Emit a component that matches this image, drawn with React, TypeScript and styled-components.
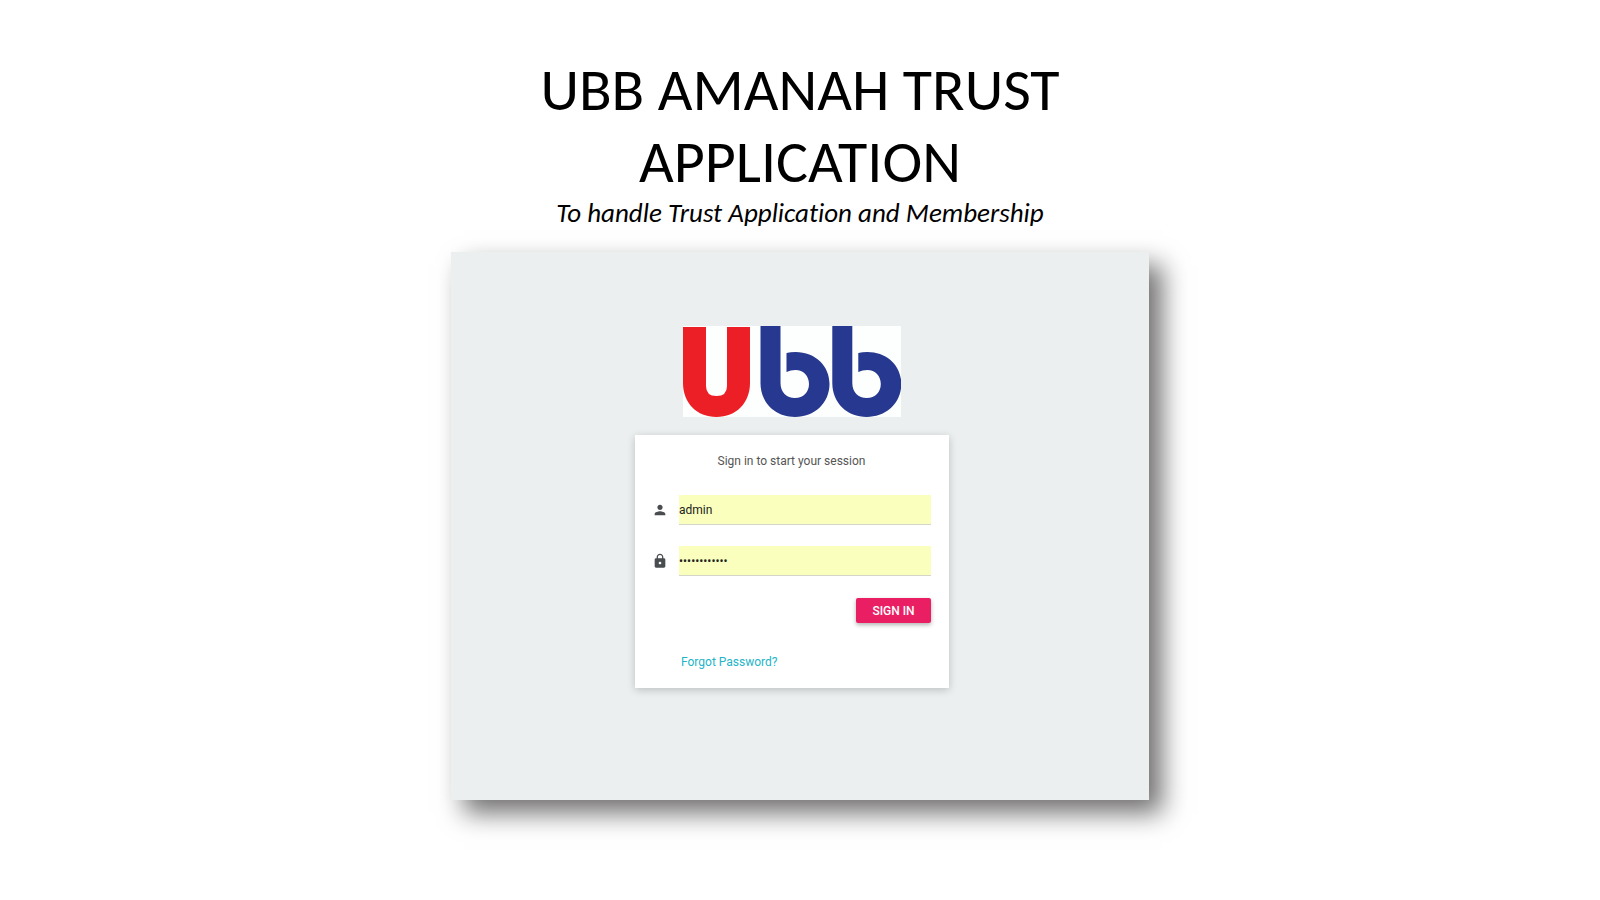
import React from "react";
import styled, { createGlobalStyle } from "styled-components";

const GlobalStyle = createGlobalStyle`
  * { box-sizing: border-box; }
  body { margin: 0; background: #fff; font-family: Roboto, "Liberation Sans", sans-serif; }
`;

const Page = styled.main`
  display: flex;
  flex-direction: column;
  align-items: center;
  min-height: 100vh;
  padding: 54px 16px 100px;
`;

const Heading = styled.header`
  width: 100%;
  max-width: 600px;
  margin-bottom: 24px;
  text-align: center;
  color: #000;
  font-family: Carlito, Calibri, "Open Sans", sans-serif;
  font-variant-ligatures: none;
`;

const Title = styled.h1`
  margin: 0;
  font-size: 60px;
  line-height: 72px;
  font-weight: 400;
`;

const Tagline = styled.p`
  margin: 0;
  font-size: 27px;
  line-height: 30px;
  font-style: italic;
`;

const Screen = styled.section`
  display: flex;
  flex-direction: column;
  align-items: center;
  width: 100%;
  max-width: 698px;
  padding: 74px 16px 112px 0;
  background: #ebeff0;
  box-shadow: 13px 13px 24px rgba(20, 16, 16, 0.6);
`;

const Logo = styled.svg`
  display: block;
  width: 218px;
  height: 91px;
  margin-bottom: 18px;
`;

const Card = styled.form`
  display: flex;
  flex-direction: column;
  width: 100%;
  max-width: 314px;
  padding: 16px 18px 16px 17px;
  background: #fff;
  box-shadow: 0 2px 8px rgba(0, 0, 0, 0.2);
  font-size: 12px;
  line-height: 20px;
`;

const Message = styled.p`
  margin: 0 0 24px;
  text-align: center;
  color: #555;
`;

const Field = styled.label`
  display: flex;
  align-items: center;
  gap: 11px;
  margin-bottom: 21px;
`;

const FieldIcon = styled.svg`
  flex: none;
  width: 16px;
  height: 16px;
  fill: #4a4d50;
`;

const Input = styled.input`
  flex: 1;
  min-width: 0;
  height: 30px;
  padding: 0;
  border: 0;
  border-bottom: 1px solid #d4d6c8;
  border-radius: 0;
  outline: 0;
  background: #faffbd;
  color: #222;
  font: 12px/20px Roboto, sans-serif;
`;

const SignIn = styled.button`
  align-self: flex-end;
  width: 75px;
  height: 25px;
  margin: 1px 0 29px;
  padding: 0;
  border: 0;
  border-radius: 2px;
  background: #e91e63;
  color: #fff;
  box-shadow: 0 2px 4px rgba(0, 0, 0, 0.3);
  font: 500 12px/24px Roboto, sans-serif;
`;

const Forgot = styled.a`
  align-self: flex-start;
  margin-left: 29px;
  color: #24b4c8;
  text-decoration: none;
`;

const B_SHAPE =
  "M0 0H20V57C20 66 26 72 34.500 72C43 72 48.500 66 48.500 58C48.500 50 43 44 35 44Q30 44 26 46V27Q30 26 35 26C55 26 69 40 69 58C69 77 54 91 34.500 91C15 91 0 77 0 57Z";

export default function App() {
  return (
    <>
      <GlobalStyle />
      <Page>
        <Heading>
          <Title>UBB AMANAH TRUST APPLICATION</Title>
          <Tagline>To handle Trust Application and Membership</Tagline>
        </Heading>
        <Screen>
          <Logo viewBox="0 0 218 91" role="img" aria-label="Ubb">
            <rect width="218" height="91" fill="#fdfefe" />
            <path
              fill="#ed1f26"
              d="M0 1H23V60Q23 70 33.500 70Q44 70 44 60V1H67V57C67 77 53 91 33.500 91C14 91 0 77 0 57Z"
            />
            <path fill="#26388f" d={B_SHAPE} transform="translate(77.500 0)" />
            <path fill="#26388f" d={B_SHAPE} transform="translate(149.300 0)" />
          </Logo>
          <Card onSubmit={(e) => e.preventDefault()}>
            <Message>Sign in to start your session</Message>
            <Field>
              <FieldIcon viewBox="0 0 24 24" aria-hidden="true">
                <path d="M12 12c2.210 0 4-1.790 4-4s-1.790-4-4-4-4 1.790-4 4 1.790 4 4 4zm0 2c-2.670 0-8 1.340-8 4v2h16v-2c0-2.660-5.330-4-8-4z" />
              </FieldIcon>
              <Input type="text" aria-label="Username" defaultValue="admin" />
            </Field>
            <Field>
              <FieldIcon viewBox="0 0 24 24" aria-hidden="true">
                <path d="M18 8h-1V6c0-2.760-2.240-5-5-5S7 3.240 7 6v2H6c-1.100 0-2 .9-2 2v10c0 1.100.9 2 2 2h12c1.100 0 2-.9 2-2V10c0-1.100-.9-2-2-2zm-6 9c-1.100 0-2-.9-2-2s.9-2 2-2 2 .9 2 2-.9 2-2 2zm3.100-9H8.900V6c0-1.710 1.390-3.100 3.100-3.100 1.710 0 3.100 1.390 3.100 3.100v2z" />
              </FieldIcon>
              <Input type="password" aria-label="Password" defaultValue="adminadmin12" />
            </Field>
            <SignIn type="submit">SIGN IN</SignIn>
            <Forgot href="#forgot">Forgot Password?</Forgot>
          </Card>
        </Screen>
      </Page>
    </>
  );
}
